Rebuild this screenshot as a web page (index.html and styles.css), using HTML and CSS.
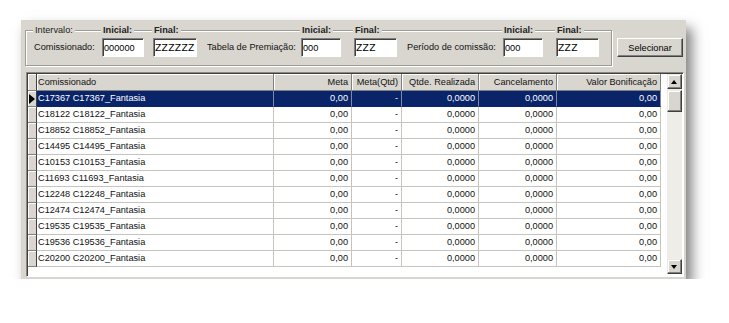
FILE: index.html
```html
<!DOCTYPE html>
<html lang="pt-BR">
<head>
    <meta charset="UTF-8">
    <title>Bonificação de Comissionados</title>
    <link rel="stylesheet" href="styles.css">
</head>
<body>
    <div class="window">
        <div class="top-bar">
            <div class="groupbox">
                <div class="group-grid">
                    <span class="caption">Intervalo:</span>
                    <span class="caption bold">Inicial:</span>
                    <span class="caption bold">Final:</span>
                    <span></span>
                    <span class="caption bold">Inicial:</span>
                    <span class="caption bold">Final:</span>
                    <span></span>
                    <span class="caption bold">Inicial:</span>
                    <span class="caption bold">Final:</span>

                    <label class="field-label">Comissionado:</label>
                    <input class="edit w42" type="text" value="000000">
                    <input class="edit w44 mono" type="text" value="ZZZZZZ">
                    <label class="field-label">Tabela de Premiação:</label>
                    <input class="edit w40" type="text" value="000">
                    <input class="edit w43 mono" type="text" value="ZZZ">
                    <label class="field-label">Período de comissão:</label>
                    <input class="edit w40" type="text" value="000">
                    <input class="edit w43 mono" type="text" value="ZZZ">
                </div>
            </div>
            <button class="btn">Selecionar</button>
        </div>

        <div class="grid-frame">
            <table class="grid">
                <colgroup>
                    <col style="width:9px">
                    <col style="width:237px">
                    <col style="width:78px">
                    <col style="width:50px">
                    <col style="width:77px">
                    <col style="width:78px">
                    <col style="width:104px">
                </colgroup>
                <thead>
                    <tr>
                        <th class="ind"></th>
                        <th class="left">Comissionado</th>
                        <th>Meta</th>
                        <th>Meta(Qtd)</th>
                        <th>Qtde. Realizada</th>
                        <th>Cancelamento</th>
                        <th>Valor Bonificação</th>
                    </tr>
                </thead>
                <tbody>
                    <tr class="selected"><td class="ind current"></td><td class="left">C17367 C17367_Fantasia</td><td>0,00</td><td>-</td><td>0,0000</td><td>0,0000</td><td>0,00</td></tr>
                    <tr><td class="ind"></td><td class="left">C18122 C18122_Fantasia</td><td>0,00</td><td>-</td><td>0,0000</td><td>0,0000</td><td>0,00</td></tr>
                    <tr><td class="ind"></td><td class="left">C18852 C18852_Fantasia</td><td>0,00</td><td>-</td><td>0,0000</td><td>0,0000</td><td>0,00</td></tr>
                    <tr><td class="ind"></td><td class="left">C14495 C14495_Fantasia</td><td>0,00</td><td>-</td><td>0,0000</td><td>0,0000</td><td>0,00</td></tr>
                    <tr><td class="ind"></td><td class="left">C10153 C10153_Fantasia</td><td>0,00</td><td>-</td><td>0,0000</td><td>0,0000</td><td>0,00</td></tr>
                    <tr><td class="ind"></td><td class="left">C11693 C11693_Fantasia</td><td>0,00</td><td>-</td><td>0,0000</td><td>0,0000</td><td>0,00</td></tr>
                    <tr><td class="ind"></td><td class="left">C12248 C12248_Fantasia</td><td>0,00</td><td>-</td><td>0,0000</td><td>0,0000</td><td>0,00</td></tr>
                    <tr><td class="ind"></td><td class="left">C12474 C12474_Fantasia</td><td>0,00</td><td>-</td><td>0,0000</td><td>0,0000</td><td>0,00</td></tr>
                    <tr><td class="ind"></td><td class="left">C19535 C19535_Fantasia</td><td>0,00</td><td>-</td><td>0,0000</td><td>0,0000</td><td>0,00</td></tr>
                    <tr><td class="ind"></td><td class="left">C19536 C19536_Fantasia</td><td>0,00</td><td>-</td><td>0,0000</td><td>0,0000</td><td>0,00</td></tr>
                    <tr><td class="ind"></td><td class="left">C20200 C20200_Fantasia</td><td>0,00</td><td>-</td><td>0,0000</td><td>0,0000</td><td>0,00</td></tr>
                </tbody>
            </table>

            <div class="scrollbar">
                <div class="sb-btn up"></div>
                <div class="sb-track">
                    <div class="sb-thumb"></div>
                </div>
                <div class="sb-btn down"></div>
            </div>
        </div>
    </div>
</body>
</html>
```

FILE: styles.css
```css
body {
    margin: 0;
    background: #fff;
    font-family: "Liberation Sans", Arial, sans-serif;
    font-size: 9.2px;
    color: #111;
}

.window {
    margin: 20px 0 0 21px;
    width: 665px;
    height: 259px;
    box-sizing: border-box;
    padding: 10px 2px 0 4px;
    background: #d9d6cf;
    box-shadow: 6px 8px 12px rgba(0,0,0,0.5);
}

/* linha de cima: groupbox + botão */
.top-bar {
    display: flex;
    align-items: flex-start;
}

.groupbox {
    width: 587px;
    height: 36px;
    box-sizing: border-box;
    border: 1px solid #9e9b94;
    box-shadow: inset 1px 1px 0 #fff, 1px 1px 0 #fff;
    padding: 0 0 0 8px;
}

.group-grid {
    display: grid;
    grid-template-columns: 68px 51px 54px 94px 53px 53px 96px 53px 1fr;
    grid-template-rows: 11px 19px;
    row-gap: 2px;
    margin-top: -6px;
    align-items: center;
}

.caption {
    justify-self: start;
    background: #d9d6cf;
    padding: 0 2px;
    margin-left: -1px;
    line-height: 11px;
    color: #222;
}

.caption.bold {
    font-weight: bold;
}

.field-label {
    color: #111;
    line-height: 19px;
}

.edit {
    height: 19px;
    box-sizing: border-box;
    margin: 0;
    padding: 0 1px;
    border: 1px solid;
    border-color: #808080 #fff #fff #808080;
    box-shadow: inset 1px 1px 0 #404040;
    background: #fff;
    font-family: "Liberation Sans", Arial, sans-serif;
    font-size: 9.2px;
    color: #000;
    outline: none;
}

.edit.mono {
    font-family: "DejaVu Sans", sans-serif;
    letter-spacing: 0.3px;
}

.w40 { width: 40px; }
.w42 { width: 42px; }
.w43 { width: 43px; }
.w44 { width: 44px; }

.btn {
    margin: 8px 0 0 5px;
    width: 66px;
    height: 19px;
    padding: 0;
    background: #d9d6cf;
    border: 1px solid;
    border-color: #fff #404040 #404040 #fff;
    box-shadow: inset -1px -1px 0 #808080;
    font-family: "Liberation Sans", Arial, sans-serif;
    font-size: 9.2px;
    color: #000;
}

/* grade */
.grid-frame {
    display: flex;
    align-items: flex-start;
    margin: 6px 0 0 1px;
    width: 658px;
    height: 205px;
    box-sizing: border-box;
    padding: 1px 0 0 1px;
    border: 1px solid;
    border-color: #8a877f #fff #fff #8a877f;
    box-shadow: inset 1px 1px 0 #404040;
    background: #fff;
}

.grid {
    table-layout: fixed;
    width: 633px;
    border-collapse: separate;
    border-spacing: 0;
}

.grid th,
.grid td {
    padding: 0 3px 0 0;
    text-align: right;
    white-space: nowrap;
    overflow: hidden;
    font-weight: normal;
    line-height: 15px;
}

.grid th {
    height: 16px;
    background: #d9d6cf;
    border-right: 1px solid #808080;
    border-bottom: 1px solid #808080;
    box-shadow: inset 1px 1px 0 #fff;
    color: #111;
}

.grid td {
    height: 15px;
    border-right: 1px solid #c6c4bf;
    border-bottom: 1px solid #c6c4bf;
}

.grid .left {
    text-align: left;
    padding-left: 1px;
}

.grid .ind {
    padding: 0;
    background: #d9d6cf;
    border-right: 1px solid #404040;
    border-bottom: 1px solid #808080;
    box-shadow: inset 1px 1px 0 #fff;
    position: relative;
}

.grid .ind.current::after {
    content: "";
    position: absolute;
    left: 1px;
    top: 3px;
    border-left: 6px solid #000;
    border-top: 5px solid transparent;
    border-bottom: 5px solid transparent;
}

.grid .selected td {
    background: #0a246a;
    color: #fff;
    border-right-color: #7d88aa;
    border-bottom-color: #0a246a;
}

.grid .selected td.ind {
    background: #d9d6cf;
    border-right-color: #404040;
    border-bottom-color: #808080;
}

/* barra de rolagem */
.scrollbar {
    margin-left: 6px;
    width: 15px;
    height: 200px;
    display: flex;
    flex-direction: column;
    background: #eeede8;
}

.sb-btn,
.sb-thumb {
    box-sizing: border-box;
    background: #d9d6cf;
    border: 1px solid;
    border-color: #eceae4 #404040 #404040 #eceae4;
    box-shadow: inset -1px -1px 0 #808080, inset 1px 1px 0 #fff;
}

.sb-btn {
    height: 15px;
    position: relative;
}

.sb-btn::after {
    content: "";
    position: absolute;
    left: 3px;
    border-left: 3.5px solid transparent;
    border-right: 3.5px solid transparent;
}

.sb-btn.up::after {
    top: 5px;
    border-bottom: 4px solid #000;
}

.sb-btn.down::after {
    top: 5px;
    border-top: 4px solid #000;
}

.sb-track {
    flex: 1;
    padding-top: 1px;
}

.sb-thumb {
    height: 22px;
}
```
